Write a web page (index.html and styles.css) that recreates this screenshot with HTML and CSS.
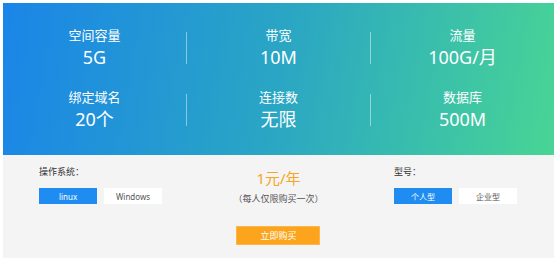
FILE: index.html
```html
<!DOCTYPE html>
<html>
<head>
  <meta charset="utf-8">
  <link rel="stylesheet" href="styles.css">
</head>
<body>
  <div class="package">
    <div class="specs">
      <div class="spec">
        <div class="spec-label">空间容量</div>
        <div class="spec-value">5G</div>
      </div>
      <div class="spec-divider"></div>
      <div class="spec">
        <div class="spec-label">带宽</div>
        <div class="spec-value">10M</div>
      </div>
      <div class="spec-divider"></div>
      <div class="spec">
        <div class="spec-label">流量</div>
        <div class="spec-value">100G/月</div>
      </div>

      <div class="spec">
        <div class="spec-label">绑定域名</div>
        <div class="spec-value">20个</div>
      </div>
      <div class="spec-divider"></div>
      <div class="spec">
        <div class="spec-label">连接数</div>
        <div class="spec-value">无限</div>
      </div>
      <div class="spec-divider"></div>
      <div class="spec">
        <div class="spec-label">数据库</div>
        <div class="spec-value">500M</div>
      </div>
    </div>

    <div class="order">
      <div class="option-group">
        <div class="option-title">操作系统：</div>
        <div class="option-buttons">
          <button class="option-button active">linux</button>
          <button class="option-button">Windows</button>
        </div>
      </div>

      <div class="price-box">
        <div class="price">1元/年</div>
        <div class="price-note">（每人仅限购买一次）</div>
        <button class="buy-button">立即购买</button>
      </div>

      <div class="option-group">
        <div class="option-title">型号：</div>
        <div class="option-buttons">
          <button class="option-button active">个人型</button>
          <button class="option-button">企业型</button>
        </div>
      </div>
    </div>
  </div>
</body>
</html>
```

FILE: styles.css
```css
body {
  margin: 0;
  padding: 3px;
  background: #fff;
  font-family: "Noto Sans", "Noto Sans CJK SC", sans-serif;
}

.package {
  width: 551px;
}

.specs {
  display: grid;
  grid-template-columns: 1fr 1px 1fr 1px 1fr;
  row-gap: 21px;
  padding: 24px 0 25px;
  background: linear-gradient(100deg, #1a85e8 0%, #2aa6c4 50%, #48d595 100%);
  color: #fff;
  text-align: center;
}

.spec {
  display: flex;
  flex-direction: column;
  gap: 3px;
}

.spec-label {
  font-size: 13px;
  line-height: 16px;
}

.spec-value {
  font-size: 18px;
  line-height: 22px;
}

.spec-divider {
  align-self: center;
  height: 32px;
  background: rgba(255, 255, 255, 0.45);
}

.order {
  display: flex;
  justify-content: space-between;
  align-items: flex-start;
  height: 103px;
  box-sizing: border-box;
  padding: 11px 36px 0;
  background: #f5f4f5;
}

.option-group {
  width: 124px;
}

.option-title {
  font-size: 9px;
  line-height: 12px;
  color: #333;
}

.option-buttons {
  display: flex;
  gap: 7px;
  margin-top: 10px;
}

.option-button {
  width: 58px;
  height: 16px;
  padding: 0;
  border: none;
  background: #fff;
  color: #555;
  font-family: inherit;
  font-size: 8px;
  cursor: pointer;
}

.option-button.active {
  background: #1e8cf0;
  color: #fff;
}

.price-box {
  display: flex;
  flex-direction: column;
  align-items: center;
  margin-top: 2px;
}

.price {
  font-size: 15px;
  line-height: 20px;
  color: #f5a623;
}

.price-note {
  margin-top: 5px;
  font-size: 9px;
  line-height: 12px;
  color: #555;
}

.buy-button {
  width: 84px;
  height: 19px;
  margin-top: 21px;
  padding: 0;
  border: 1px solid #fcb64a;
  background: #fca51c;
  color: #fff;
  font-family: inherit;
  font-size: 9px;
  cursor: pointer;
}
```
